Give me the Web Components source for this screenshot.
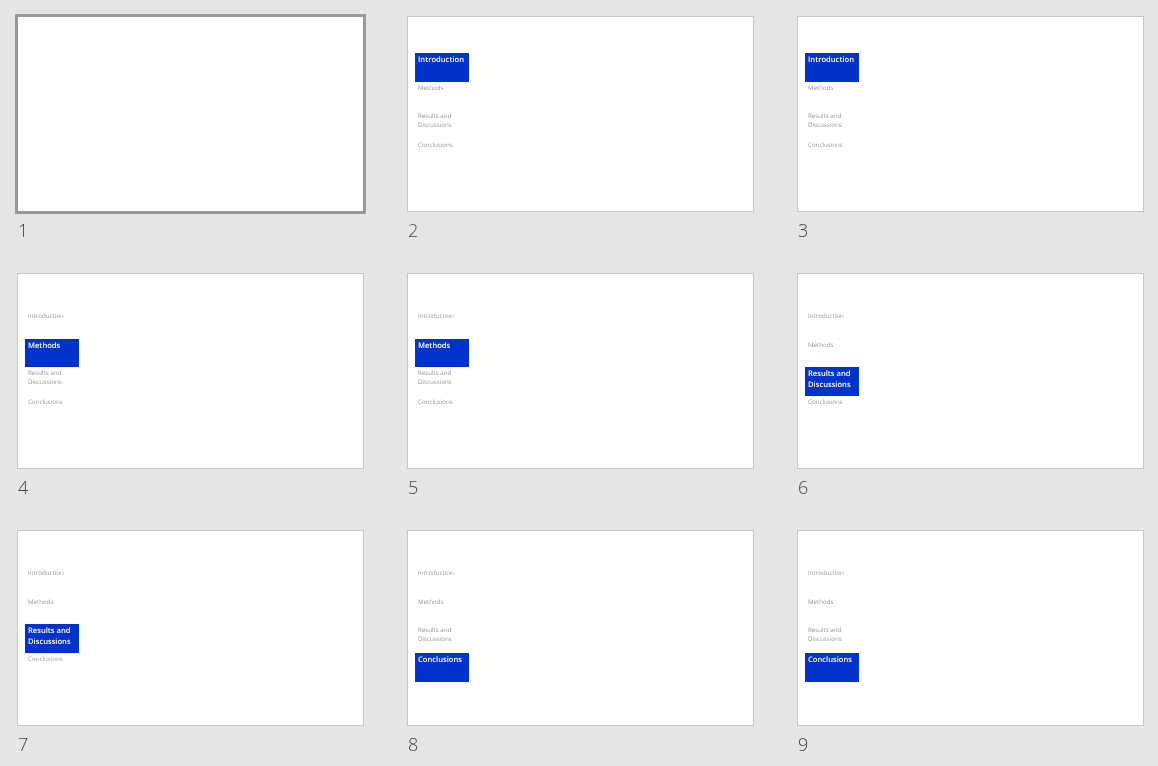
<!DOCTYPE html>
<html>
<head>
<meta charset="utf-8">
<title>Slide sorter</title>
<style>
  html, body { margin: 0; height: 100%; }
  body { background: #e6e6e6; overflow: hidden; }
</style>
</head>
<body>
<slide-sorter></slide-sorter>

<script>
// which section is highlighted on each slide, -1 for the empty title slide
const slides = [-1, 0, 0, 1, 1, 2, 2, 3, 3];

class SectionNav extends HTMLElement {
  constructor() {
    super();
    this._root = this.attachShadow({mode: 'open'});
    this._root.innerHTML = `
      <style>
        :host {
          display: grid;
          grid-auto-rows: 28.7px;
          width: 54px;
          margin: 36px 0 0 7px;
          font-family: "Open Sans", sans-serif;
          text-rendering: geometricPrecision;
          will-change: transform;
        }
        div {
          padding: 2px 3px 0;
          font-size: 6.2px;
          line-height: 8.3px;
          color: #989898;
        }
        div.active {
          padding-top: 2px;
          background: #0033cc;
          color: #fff;
          font-size: 7.6px;
          font-weight: 600;
          line-height: 11px;
        }
      </style>
      <div>Introduction</div>
      <div>Methods</div>
      <div>Results and<br>Discussions</div>
      <div>Conclusions</div>
    `;
  }

  set active(index) {
    const items = this._root.querySelectorAll('div');
    if (items[index]) {
      items[index].className = 'active';
    }
  }
}

class SlideThumb extends HTMLElement {
  constructor() {
    super();
    this._root = this.attachShadow({mode: 'open'});
    this._root.innerHTML = `
      <style>
        :host {
          display: flex;
          flex-direction: column;
          font-family: "Open Sans", sans-serif;
        }
        .page {
          box-sizing: border-box;
          height: 196px;
          display: flex;
          background: #fff;
          border: 1px solid #c6c6c6;
        }
        :host([selected]) .page {
          outline: 3px solid #999;
          outline-offset: -1px;
        }
        .number {
          margin: 7px 0 0 1px;
          font-size: 18px;
          font-weight: 300;
          line-height: 23px;
          color: #444;
          will-change: transform;
        }
      </style>
      <div class="page"><slot></slot></div>
      <div class="number"></div>
    `;
  }

  connectedCallback() {
    this._root.querySelector('.number').textContent = this.getAttribute('number');
  }
}

class SlideSorter extends HTMLElement {
  constructor() {
    super();
    this._root = this.attachShadow({mode: 'open'});
    this._root.innerHTML = `
      <style>
        :host {
          display: grid;
          grid-template-columns: repeat(3, 347px);
          grid-auto-rows: 257px;
          column-gap: 43px;
          padding: 16px 0 0 17px;
        }
      </style>
      <slot></slot>
    `;
  }

  connectedCallback() {
    slides.forEach((section, i) => {
      const thumb = document.createElement('slide-thumb');
      thumb.setAttribute('number', i + 1);
      if (i === 0) {
        thumb.setAttribute('selected', '');
      }
      if (section >= 0) {
        const nav = document.createElement('section-nav');
        nav.active = section;
        thumb.appendChild(nav);
      }
      this.appendChild(thumb);
    });
  }
}

window.customElements.define('section-nav', SectionNav);
window.customElements.define('slide-thumb', SlideThumb);
window.customElements.define('slide-sorter', SlideSorter);
</script>
</body>
</html>
